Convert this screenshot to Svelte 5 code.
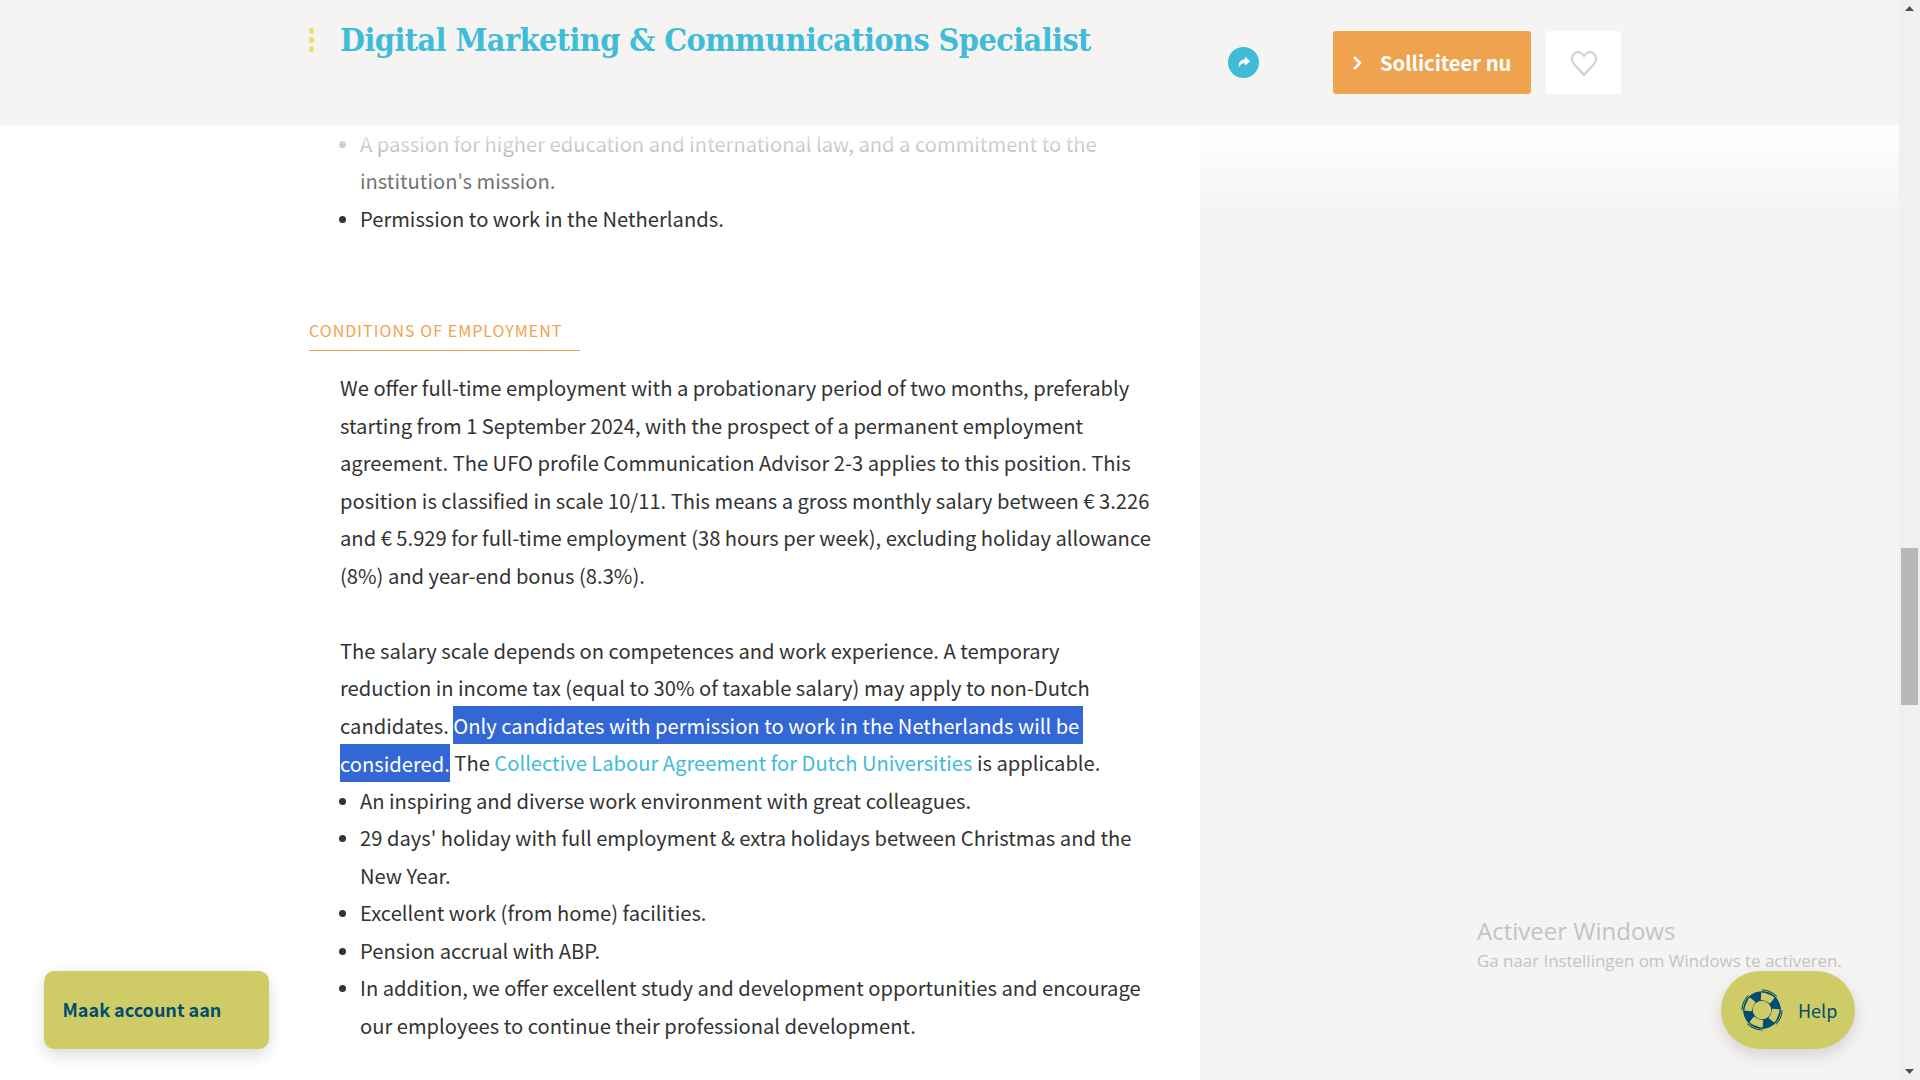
<script>
  const topList = ["A passion for higher education and international law, and a commitment to the institution's mission.", "Permission to work in the Netherlands."];
  const benefits = [
    "An inspiring and diverse work environment with great colleagues.",
    "29 days' holiday with full employment & extra holidays between Christmas and the New Year.",
    "Excellent work (from home) facilities.",
    "Pension accrual with ABP.",
    "In addition, we offer excellent study and development opportunities and encourage our employees to continue their professional development."
  ];
</script>

<div class="page">
  <div class="content">
    <main class="main">
      <ul class="list">
        {#each topList as item}<li>{item}</li>{/each}
      </ul>
      <h2 class="section"><span>Conditions of employment</span></h2>
      <div class="body">
        <p>We offer full-time employment with a probationary period of two months, preferably starting from 1 September 2024, with the prospect of a permanent employment agreement. The UFO profile Communication Advisor 2-3 applies to this position. This position is classified in scale 10/11. This means a gross monthly salary between € 3.226 and € 5.929 for full-time employment (38 hours per week), excluding holiday allowance (8%) and year-end bonus (8.3%).</p>
        <p>The salary scale depends on competences and work experience. A temporary reduction in income tax (equal to 30% of taxable salary) may apply to non-Dutch candidates. <span class="sel first">Only candidates with permission to work in the Netherlands will be</span> <span class="sel">considered.</span> The <a href="#top">Collective Labour Agreement for Dutch Universities</a> is applicable.</p>
      </div>
      <ul class="list">
        {#each benefits as item}<li>{item}</li>{/each}
      </ul>
    </main>
    <aside class="aside">
      <div class="activate">
        <div class="a1">Activeer Windows</div>
        <div class="a2">Ga naar Instellingen om Windows te activeren.</div>
      </div>
    </aside>
    <div class="scrollbar">
      <svg class="arrow" viewBox="0 0 21 17" width="21" height="17"><path d="M10.5 6 L15 11 H6 Z" fill="#505050"/></svg>
      <div class="track"><div class="thumb"></div></div>
      <svg class="arrow" viewBox="0 0 21 17" width="21" height="17"><path d="M10.5 11 L15 6 H6 Z" fill="#505050"/></svg>
    </div>
  </div>

  <div class="fade"></div>

  <header class="header">
    <div class="title-wrap">
      <span class="dots"><i></i><i></i><i></i></span>
      <h1>Digital Marketing &amp; Communications Specialist</h1>
    </div>
    <div class="share">
      <svg viewBox="0 0 16 16" width="17" height="17"><path d="M9.4 2.6 L14.2 6.8 L9.4 11 V8.6 C6.6 8.5 4.8 9.6 3.6 12.6 C3.1 8.2 5.2 5.2 9.4 5 Z" fill="#fff"/></svg>
    </div>
    <button class="apply">
      <svg viewBox="0 0 12 18" width="12" height="18"><path d="M3 3 L9 9 L3 15" fill="none" stroke="#fff" stroke-width="2.6"/></svg>
      <span>Solliciteer nu</span>
    </button>
    <button class="fav" aria-label="Favoriet">
      <svg viewBox="0 0 30 28" width="30" height="28"><path d="M15 26 L5 15 C2 11.5 2.5 6.5 5.5 4.3 C9 2 13 3.5 15 7 C17 3.5 21 2 24.5 4.3 C27.5 6.5 28 11.5 25 15 Z" fill="none" stroke="#d4d2d0" stroke-width="2.2" stroke-linejoin="round"/></svg>
    </button>
  </header>

  <button class="account">Maak account aan</button>
  <button class="help">
    <svg viewBox="0 0 44 44" width="44" height="44">
      <g transform="rotate(22 22 22)">
        <circle cx="22" cy="22" r="14" fill="none" stroke="#004d71" stroke-width="9.5"/>
        <g fill="#cfcc68">
          <path d="M14.5 5 L29.5 5 L27 13 Q22 11.5 17 13 Z"/>
          <path d="M14.5 39 L29.5 39 L27 31 Q22 32.5 17 31 Z"/>
          <path d="M5 14.5 L5 29.5 L13 27 Q11.5 22 13 17 Z"/>
          <path d="M39 14.5 L39 29.5 L31 27 Q32.5 22 31 17 Z"/>
        </g>
        <circle cx="22" cy="22" r="20" fill="none" stroke="#004d71" stroke-width="1" stroke-dasharray="17 14.4" stroke-dashoffset="8.5"/>
        <circle cx="22" cy="22" r="18" fill="none" stroke="#004d71" stroke-width="1"/>
      </g>
    </svg>
    <span>Help</span>
  </button>
</div>

<style>
  :global(body) {
    margin: 0;
    overflow: hidden;
    background: #fff;
  }
  .page {
    position: relative;
    width: 1920px;
    height: 1080px;
    overflow: hidden;
    font-family: "Noto Sans CJK SC", "Noto Sans", sans-serif;
    color: #333;
  }
  .content {
    display: flex;
    height: 100%;
  }
  .main {
    width: 1200px;
    box-sizing: border-box;
    flex: none;
    padding: 124.6px 47px 0 309px;
    font-size: 20.16px;
    line-height: 37.5px;
  }
  .list {
    margin: 0;
    padding: 0 0 0 51px;
    list-style: disc;
  }
  .list li::marker {
    font-size: 0.9em;
  }
  .section {
    margin: 75px 0 18.2px;
    font-size: 16px;
    font-weight: 400;
    line-height: 37px;
    text-transform: uppercase;
    letter-spacing: 1.05px;
    color: #efa34e;
  }
  .section span {
    display: block;
    width: 271px;
    border-bottom: 1px solid #efa34e;
    padding-bottom: 1px;
  }
  .body {
    padding-left: 31px;
  }
  .body p {
    margin: 0 0 37.5px;
  }
  .body p:last-child {
    margin-bottom: 0;
  }
  .sel {
    background: #3367d6;
    color: #fff;
    padding: 4.5px 0;
  }
  .first {
    padding-right: 4px;
  }
  a {
    color: #3fbcd8;
    text-decoration: none;
  }
  .aside {
    flex: 1;
    background: #f5f4f2;
    position: relative;
  }
  .fade {
    position: absolute;
    left: 0;
    right: 21px;
    top: 125px;
    height: 85px;
    background: linear-gradient(#fff, rgba(255, 255, 255, 0));
  }
  .activate {
    position: absolute;
    left: 277px;
    top: 914px;
    color: #c4c3c2;
    font-family: "Open Sans", sans-serif;
    white-space: nowrap;
  }
  .a1 {
    font-size: 24px;
    line-height: 33px;
  }
  .a2 {
    font-size: 16.9px;
    line-height: 27px;
  }
  .scrollbar {
    width: 21px;
    flex: none;
    background: #f0f0f0;
    display: flex;
    flex-direction: column;
    position: relative;
    z-index: 3;
  }
  .arrow {
    flex: none;
    display: block;
  }
  .track {
    flex: 1;
    padding: 531px 2px 0;
  }
  .thumb {
    height: 157px;
    background: #b8b8b8;
  }
  .header {
    position: absolute;
    left: 0;
    top: 0;
    width: 1899px;
    height: 125px;
    background: #f5f4f2;
    display: flex;
    align-items: flex-start;
    padding-left: 309px;
    box-sizing: border-box;
  }
  .title-wrap {
    width: 911px;
    flex: none;
    display: flex;
    align-items: center;
    height: 80px;
  }
  .dots {
    display: flex;
    flex-direction: column;
    gap: 3.5px;
    width: 31px;
    flex: none;
  }
  .dots i {
    display: block;
    width: 5px;
    height: 5.5px;
    border-radius: 50%;
    background: #e8e06a;
  }
  h1 {
    margin: 0;
    font-family: "DejaVu Serif Condensed", "DejaVu Serif", "Liberation Serif", serif;
    font-stretch: condensed;
    font-weight: 700;
    font-size: 32px;
    line-height: 40px;
    letter-spacing: -0.55px;
    color: #3fbcd8;
    white-space: nowrap;
  }
  .share {
    width: 31px;
    height: 31px;
    border-radius: 50%;
    background: #3fbcd8;
    margin: 47px 0 0 8px;
    flex: none;
    display: flex;
    align-items: center;
    justify-content: center;
  }
  button {
    border: 0;
    font-family: inherit;
    cursor: pointer;
  }
  .apply {
    margin: 31px 0 0 74px;
    width: 198px;
    height: 63px;
    flex: none;
    background: #efa34e;
    border-radius: 3px;
    color: #fff;
    font-size: 20.16px;
    font-weight: 700;
    display: flex;
    align-items: center;
    padding: 0 0 0 18px;
    gap: 17px;
  }
  .fav {
    margin: 31px 0 0 15px;
    width: 75px;
    height: 63px;
    flex: none;
    background: #fff;
    border-radius: 3px;
    display: flex;
    align-items: center;
    justify-content: center;
    padding: 0;
  }
  .account {
    position: absolute;
    left: 44px;
    top: 971px;
    width: 225px;
    height: 78px;
    background: #cfcc68;
    border-radius: 10px;
    color: #004d71;
    font-size: 18px;
    font-weight: 700;
    text-align: left;
    padding: 0 0 2px 18.5px;
    box-shadow: 0 6px 16px rgba(0, 0, 0, 0.14);
  }
  .help {
    position: absolute;
    left: 1721px;
    top: 971px;
    width: 134px;
    height: 78px;
    background: #cfcc68;
    border-radius: 39px;
    color: #004d71;
    font-size: 18px;
    display: flex;
    align-items: center;
    padding: 0 0 0 19px;
    gap: 14px;
    box-shadow: 0 6px 16px rgba(0, 0, 0, 0.14);
  }
</style>
